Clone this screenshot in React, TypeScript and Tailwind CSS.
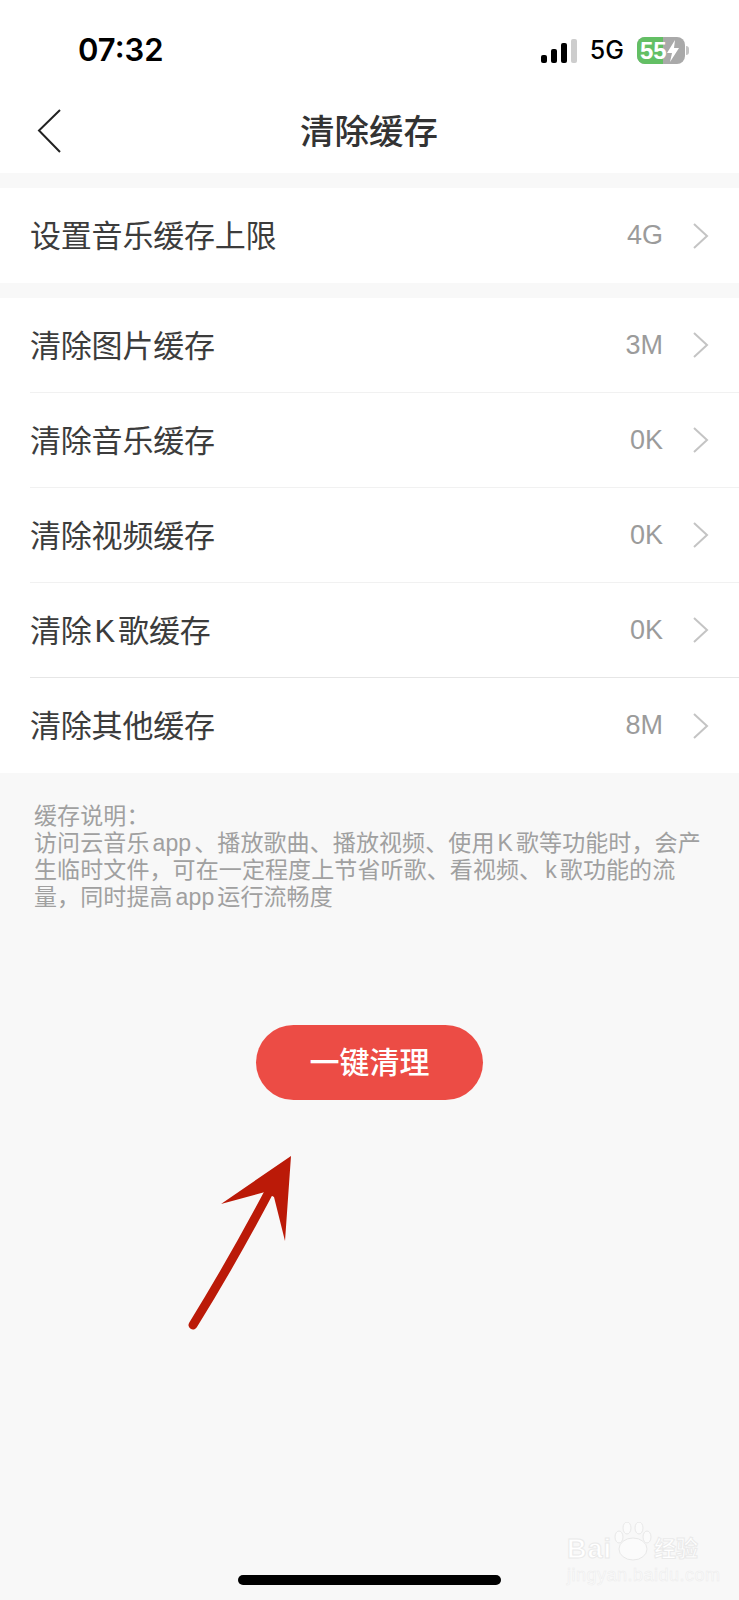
import React from 'react';

const FONT = 'font-["Liberation_Sans","Noto_Sans_CJK_SC",sans-serif]';

const topRows = [
  { label: '清除图片缓存', value: '3M' },
  { label: '清除音乐缓存', value: '0K' },
  { label: '清除视频缓存', value: '0K' },
];

const Chevron = () => (
  <svg width="17" height="28" viewBox="0 0 17 28" fill="none" className="shrink-0">
    <path d="M2 2l13 12L2 26" stroke="#c4c4c4" strokeWidth="2" />
  </svg>
);

const Row = ({ label, value, divider }: { label: React.ReactNode; value: string; divider?: string }) => (
  <div className="ml-[30px] flex h-[95px] items-center pr-[30px]" style={divider ? { borderBottom: `1px solid ${divider}` } : undefined}>
    <span className="flex-1 pt-[4px] text-[31px] tracking-[-0.2px] text-[#3c3c3c]">{label}</span>
    <span className="text-[27px] text-[#9b9b9b]">{value}</span>
    <span className="ml-[29px]">
      <Chevron />
    </span>
  </div>
);

const StatusBar = () => (
  <div className="flex h-[98px] items-center pl-[78px] pr-[50px] pt-[3px]">
    <span className='flex-1 font-["Inter",sans-serif] text-[31px] font-semibold text-black'>07:32</span>
    <div className="flex items-end gap-[4px]">
      <div className="h-[8px] w-[6px] rounded-[2px] bg-black" />
      <div className="h-[14px] w-[6px] rounded-[2px] bg-black" />
      <div className="h-[20px] w-[6px] rounded-[2px] bg-black" />
      <div className="h-[24px] w-[6px] rounded-[2px] bg-[#cdcdcd]" />
    </div>
    <span className='ml-[13px] font-["Inter",sans-serif] text-[25px] font-medium text-black'>5G</span>
    <div className="relative ml-[13px] flex h-[27px] w-[48px] items-center overflow-hidden rounded-[8px] bg-[#a9a9a9]">
      <div className="absolute inset-y-0 left-0 w-[26px] bg-[#63bf64]" />
      <span className="relative ml-[3px] text-[24px] font-bold leading-none text-white">55</span>
      <svg width="14" height="22" viewBox="0 0 14 22" className="relative -ml-[1px]">
        <path d="M9 0L1 13h5l-2 9 9-14H8z" fill="#fff" />
      </svg>
    </div>
    <div className="ml-[1px] h-[9px] w-[3px] rounded-r-full bg-[#c4c4c4]" />
  </div>
);

const Watermark = () => (
  <div className="absolute left-[567px] top-[1520px] w-[135px] whitespace-nowrap">
    <div className="flex h-[42px] items-end">
      <span className="text-[27px] font-bold leading-[26px] tracking-[1px] text-white [-webkit-text-stroke:1px_#eaeaea]">Bai</span>
      <svg width="40" height="40" viewBox="0 0 40 40" className="ml-[1px] shrink-0">
        <g fill="#fbfbfb" stroke="#e8e8e8">
          <ellipse cx="6" cy="15" rx="4" ry="6" />
          <ellipse cx="14" cy="6" rx="4" ry="6" />
          <ellipse cx="26" cy="6" rx="4" ry="6" />
          <ellipse cx="34" cy="15" rx="4" ry="6" />
          <ellipse cx="20" cy="27" rx="14" ry="11" />
        </g>
      </svg>
      <span className="ml-[1px] text-[22px] font-bold leading-[26px] text-white [-webkit-text-stroke:1px_#eaeaea]">经验</span>
    </div>
    <div className="mt-[3px] text-[18px] leading-[20px] tracking-[0.5px] text-[#fbfbfb] [-webkit-text-stroke:0.5px_#ececec]">jingyan.baidu.com</div>
  </div>
);

const App: React.FC = () => {
  return (
    <div className={`${FONT} relative flex h-[1600px] w-[739px] flex-col overflow-hidden bg-[#f8f8f8]`}>
      <div className="bg-white">
        <StatusBar />
        {/* Nav bar */}
        <div className="relative flex h-[75px] items-center justify-center">
          <svg width="26" height="44" viewBox="0 0 26 44" fill="none" className="absolute left-[36px] top-[11px]">
            <path d="M24 1L3 21.5 24 43" stroke="#222" strokeWidth="2" />
          </svg>
          <span className="-ml-[1px] mb-[6px] text-[34.5px] font-medium text-[#333]">清除缓存</span>
        </div>
      </div>

      <div className="mt-[15px] bg-white">
        <Row label="设置音乐缓存上限" value="4G" />
      </div>

      <div className="mt-[15px] bg-white">
        {topRows.map((row) => (
          <Row key={row.label} label={row.label} value={row.value} divider="#f1f1f1" />
        ))}
        <Row label={<>清除<span className="mx-[3px]">K</span>歌缓存</>} value="0K" divider="#e6e6e6" />
        <Row label="清除其他缓存" value="8M" />
      </div>

      <div className="ml-[34px] mr-[30px] mt-[30px] text-[23px] leading-[27px] tracking-[0.1px] text-[#a0a0a0]">
        <div>缓存说明：</div>
        <div>
          访问云音乐<span className="mx-[3px]">app</span>、播放歌曲、播放视频、使用<span className="mx-[3px]">K</span>歌等功能时，会产生临时文件，可在一定程度上节省听歌、看视频、<span className="mx-[3px]">k</span>歌功能的流量，同时提高<span className="mx-[3px]">app</span>运行流畅度
        </div>
      </div>

      <button className="mx-auto mt-[114px] flex h-[75px] w-[227px] items-center justify-center rounded-full bg-[#ec4c45] text-[30px] font-medium text-white">
        一键清理
      </button>

      {/* Home indicator */}
      <div className="mx-auto mb-[15px] mt-auto h-[10px] w-[263px] rounded-full bg-black" />

      {/* Annotation arrow */}
      <svg width="739" height="1600" viewBox="0 0 739 1600" fill="none" className="pointer-events-none absolute left-0 top-0">
        <path d="M193 1325Q232 1262 270 1190" stroke="#bb1a08" strokeWidth="9" strokeLinecap="round" />
        <path d="M291 1156L221 1204 265 1192 274 1197 285 1241z" fill="#bb1a08" />
      </svg>

      <Watermark />
    </div>
  );
};

export default App;
